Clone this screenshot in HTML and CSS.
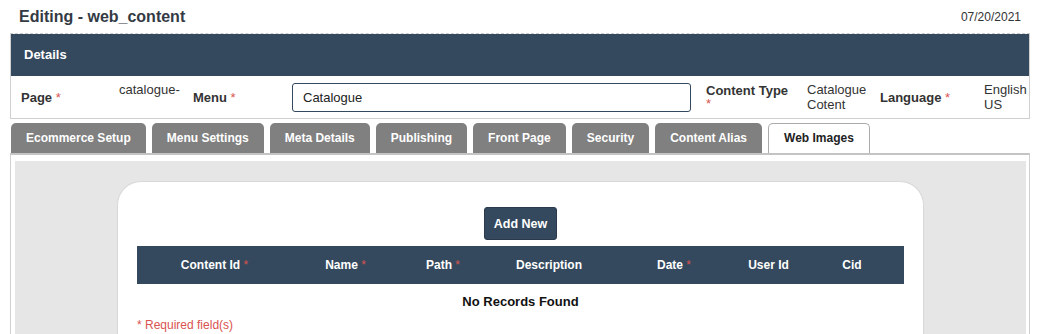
FILE: index.html
```html
<!DOCTYPE html>
<html>
<head>
<meta charset="utf-8">
<link rel="stylesheet" href="styles.css">
</head>
<body>
<div class="page">
  <div class="topbar">
    <h1 class="title">Editing - web_content</h1>
    <span class="date">07/20/2021</span>
  </div>
  <section class="details">
    <div class="details-head">Details</div>
    <div class="details-row">
      <div class="lbl">Page <span class="req">*</span></div>
      <div class="val top">catalogue-</div>
      <div class="lbl">Menu <span class="req">*</span></div>
      <div class="input-wrap"><input class="text-input" type="text" value="Catalogue"></div>
      <div class="lbl narrow">Content Type <span class="req">*</span></div>
      <div class="val">Catalogue Cotent</div>
      <div class="lbl">Language <span class="req">*</span></div>
      <div class="val">English US</div>
    </div>
  </section>
  <nav class="tabs">
    <div class="tab">Ecommerce Setup</div>
    <div class="tab">Menu Settings</div>
    <div class="tab">Meta Details</div>
    <div class="tab">Publishing</div>
    <div class="tab">Front Page</div>
    <div class="tab">Security</div>
    <div class="tab">Content Alias</div>
    <div class="tab active">Web Images</div>
  </nav>
  <section class="panel">
    <div class="panel-inner">
      <div class="card">
        <div class="actions"><button class="btn">Add New</button></div>
        <table class="grid">
          <thead>
            <tr>
              <th class="c1">Content Id <span class="req">*</span></th>
              <th class="c2">Name <span class="req">*</span></th>
              <th class="c3">Path <span class="req">*</span></th>
              <th class="c4">Description</th>
              <th class="c5">Date <span class="req">*</span></th>
              <th class="c6">User Id</th>
              <th class="c7">Cid</th>
            </tr>
          </thead>
          <tbody>
            <tr><td colspan="7" class="empty">No Records Found</td></tr>
          </tbody>
        </table>
        <div class="note">* Required field(s)</div>
      </div>
    </div>
  </section>
</div>
</body>
</html>
```
FILE: styles.css
```css
html, body {
  margin: 0;
  padding: 0;
  background: #fff;
  overflow: hidden;
}
body {
  font-family: "Liberation Sans", Arial, sans-serif;
  font-size: 13px;
  color: #222;
}
.page {
  width: 1048px;
  height: 334px;
  overflow: hidden;
}
.topbar {
  display: flex;
  justify-content: space-between;
  align-items: center;
  height: 33px;
  padding: 0 27px 0 19px;
}
.title {
  margin: 0;
  font-size: 16px;
  font-weight: bold;
  color: #333a44;
}
.date {
  font-size: 12px;
  color: #333;
}
.details {
  margin-left: 10px;
  width: 1018px;
  border-top: 1px dashed #ccc;
  border-left: 1px solid #d0d0d0;
  border-right: 1px solid #d0d0d0;
  border-bottom: 1px solid #d0d0d0;
}
.details-head {
  background: #34495e;
  color: #fff;
  font-weight: bold;
  height: 42px;
  line-height: 42px;
  padding-left: 13px;
}
.details-row {
  display: grid;
  grid-template-columns: 98px 74px 99px 399px 15px 101px 73px 104px 45px;
  height: 42px;
  padding-left: 10px;
  align-items: center;
  color: #333;
}
.lbl {
  font-weight: bold;
  line-height: 13px;
}
.req {
  color: #d9534f;
  font-weight: normal;
}
.val {
  line-height: 15px;
}
.val.top {
  align-self: start;
  padding-top: 6px;
}
.input-wrap {
  grid-column: 4;
}
.narrow {
  grid-column: 6;
  max-width: 86px;
}
.text-input {
  box-sizing: border-box;
  width: 399px;
  height: 29px;
  border: 1px solid #34495e;
  border-radius: 3px;
  padding: 0 10px;
  font-family: "Liberation Sans", Arial, sans-serif;
  font-size: 13px;
  color: #222;
  outline: none;
}
.tabs {
  display: flex;
  gap: 6px;
  margin: 4px 0 0 11px;
  height: 30px;
}
.tab {
  box-sizing: border-box;
  height: 30px;
  line-height: 30px;
  padding: 0 15px;
  background: #808080;
  color: #fff;
  font-weight: bold;
  font-size: 12px;
  border-radius: 5px 5px 0 0;
}
.tab.active {
  background: #fff;
  color: #222;
  border: 1px solid #aaa;
  border-bottom: none;
  line-height: 29px;
}
.panel {
  margin-left: 10px;
  width: 1020px;
  border-top: 2px solid #c4c4c4;
  border-left: 1px solid #d0d0d0;
  border-right: 1px solid #d0d0d0;
  height: 200px;
  padding: 6px 3px 0 4px;
  box-sizing: border-box;
}
.panel-inner {
  background: #e6e6e6;
  height: 100%;
  padding: 20px 102px 0 102px;
}
.card {
  background: #fff;
  border: 1px solid #d8d8d8;
  border-radius: 24px 24px 0 0;
  border-bottom: none;
  padding: 25px 19px 0 19px;
  height: 200px;
}
.actions {
  display: flex;
  justify-content: center;
  margin-bottom: 6px;
}
.btn {
  background: #34495e;
  color: #fff;
  font-family: "Liberation Sans", Arial, sans-serif;
  font-weight: bold;
  font-size: 12.5px;
  border: 1px solid #2a3a4c;
  border-radius: 3px;
  height: 33px;
  padding: 0;
  width: 73px;
  white-space: nowrap;
}
.grid {
  width: 100%;
  border-collapse: collapse;
}
.grid th {
  background: #34495e;
  color: #fff;
  font-weight: bold;
  font-size: 12px;
  height: 38px;
  padding: 0;
  text-align: center;
}
.c1 { width: 155px; }
.c2 { width: 107px; }
.c3 { width: 88px; }
.c4 { width: 124px; }
.c5 { width: 126px; }
.c6 { width: 63px; }
.c7 { width: 104px; }
.empty {
  text-align: center;
  font-weight: bold;
  color: #111;
  height: 34px;
  padding: 0;
}
.note {
  color: #d9534f;
  font-size: 12px;
  margin-top: 0;
}
```
